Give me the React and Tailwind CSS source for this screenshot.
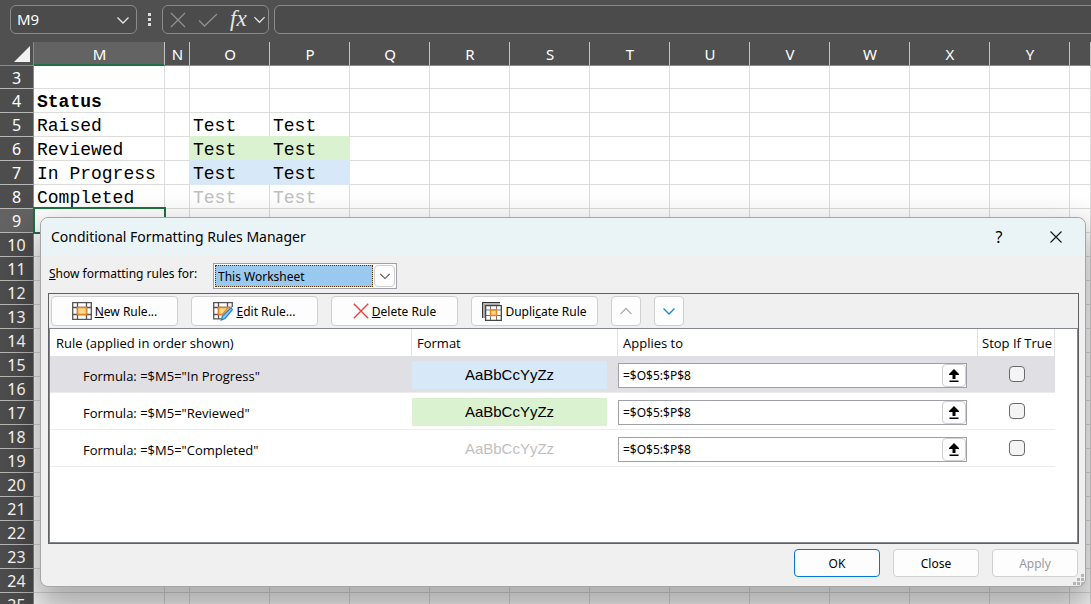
import { useState } from 'react';
import clsx from 'clsx';

const COLUMNS = ['M', 'N', 'O', 'P', 'Q', 'R', 'S', 'T', 'U', 'V', 'W', 'X', 'Y', ''];
const ROWS = Array.from({ length: 23 }, (_, i) => i + 3);

const CELLS = {
  M4: { text: 'Status', className: 'font-bold' },
  M5: { text: 'Raised' },
  M6: { text: 'Reviewed' },
  M7: { text: 'In Progress' },
  M8: { text: 'Completed' },
  N6: { className: 'border-r-[#daf2d0]' },
  N7: { className: 'border-r-[#d7e8f8]' },
  O5: { text: 'Test', className: 'border-b-[#daf2d0]' },
  P5: { text: 'Test', className: 'border-b-[#daf2d0]' },
  O6: { text: 'Test', className: 'bg-[#daf2d0] border-r-[#daf2d0] border-b-[#d7e8f8]' },
  P6: { text: 'Test', className: 'bg-[#daf2d0] border-r-[#daf2d0] border-b-[#d7e8f8]' },
  O7: { text: 'Test', className: 'bg-[#d7e8f8] border-r-[#d7e8f8] border-b-[#d7e8f8]' },
  P7: { text: 'Test', className: 'bg-[#d7e8f8] border-r-[#d7e8f8] border-b-[#d7e8f8]' },
  O8: { text: 'Test', className: 'text-[#bfbfbf]' },
  P8: { text: 'Test', className: 'text-[#bfbfbf]' },
};

const RULES = [
  { id: 1, status: 'In Progress', range: '=$O$5:$P$8', preview: 'bg-[#d7e8f8] text-black' },
  { id: 2, status: 'Reviewed', range: '=$O$5:$P$8', preview: 'bg-[#daf2d0] text-black' },
  { id: 3, status: 'Completed', range: '=$O$5:$P$8', preview: 'text-[#bfbfbf]' },
];

function Chevron({ className, up = false, size = 14 }) {
  return (
    <svg className={className} width={size} height={size} viewBox="0 0 14 14" fill="none" stroke="currentColor" strokeWidth="1.3">
      <path d={up ? 'M1.5 10 7 4.5l5.5 5.5' : 'M1.5 4.5 7 10l5.5-5.5'} />
    </svg>
  );
}

function GridIcon() {
  return (
    <svg width="20" height="18" viewBox="0 0 20 18" fill="none">
      <path d="M.5.5h19v17H.5z" fill="#fff" />
      <path d="M5.5 0v18M14.5 0v18M0 5.5h20M0 12.5h20M.7.7h18.6v16.6H.7z" stroke="#555" strokeWidth="1.3" />
      <path d="M5.5 5.5h9v7h-9z" fill="#fbd78b" stroke="#e8811a" strokeWidth="1.5" />
    </svg>
  );
}

function EditIcon() {
  return (
    <svg width="20" height="19" viewBox="0 0 20 19" fill="none">
      <path d="M.5.5h19v6L9 17.5H.5z" fill="#fff" />
      <path d="M5.5 0v17M14.5 0v6M0 5.5h19M0 12.5h10M9 16.8H.7V.7h18.6V5" stroke="#555" strokeWidth="1.3" />
      <path d="M5.5 5.5h10l-6 7h-4z" fill="#fbd78b" stroke="#e8811a" strokeWidth="1.5" />
      <path d="M7.5 18.5 9 13.5 17 5.5c1-.9 3.4 1 2.5 2.5l-8 8.5z" fill="#fff" />
      <path d="m8.3 18 1.2-4 7.7-7.5c1-.8 2.6.7 1.8 1.7L12 16.5z" fill="#8fc8f0" stroke="#1e7fc8" strokeWidth="1.2" />
    </svg>
  );
}

function DuplicateIcon() {
  return (
    <svg width="20" height="19" viewBox="0 0 20 19" fill="none">
      <path d="M.7 16V.7H18" stroke="#333" strokeWidth="1.3" />
      <path d="M1.500 16V1.500H18v2H3.500V16z" fill="#aaa" />
      <path d="M3.600 3.600h15.700v14.700H3.600z" fill="#fff" />
      <path d="M8.500 3v15.500M14.500 3v15.500M3 8h16.500M3 13.500h16.500" stroke="#777" />
      <path d="M3.600 3.600h15.700v14.700H3.600z" stroke="#444" strokeWidth="1.300" />
      <path d="M8.500 8h6v5.500h-6z" fill="#fbd78b" stroke="#e8811a" strokeWidth="1.400" />
    </svg>
  );
}

function DeleteIcon() {
  return (
    <svg width="16" height="16" viewBox="0 0 16 16" stroke="#e8413c" strokeWidth="1.4">
      <path d="m.8.8 14.400 14.400M15.200.8.8 15.200" />
    </svg>
  );
}

function FormulaBar() {
  return (
    <div className="flex h-[42px] items-start overflow-hidden bg-[#505050] pt-[5px] text-[#e6e6e6]">
      <div className="ml-2.5 flex h-[29px] w-[127px] shrink-0 items-center rounded-md border border-[#8a8a8a] bg-[#4b4b4b]">
        <input aria-label="Name box" defaultValue="M9" className="w-full min-w-0 bg-transparent pl-1.5 text-[15px] text-white outline-none" />
        <button type="button" aria-label="Cell names" className="mr-1.5 shrink-0">
          <Chevron />
        </button>
      </div>
      <div className="flex h-[29px] w-[25px] shrink-0 flex-col items-center justify-center gap-0.5">
        <span className="size-[3px] bg-[#dcdcdc]" />
        <span className="size-[3px] bg-[#dcdcdc]" />
        <span className="size-[3px] bg-[#dcdcdc]" />
      </div>
      <div className="flex h-[29px] w-[107px] shrink-0 items-center rounded-md border border-[#8a8a8a] bg-[#4b4b4b] pl-[7px]">
        <button type="button" aria-label="Cancel" className="text-[#8f8f8f]">
          <svg width="16" height="16" viewBox="0 0 16 16" stroke="currentColor" strokeWidth="1.3"><path d="m1 1 14 14M15 1 1 15" /></svg>
        </button>
        <button type="button" aria-label="Enter" className="ml-3 text-[#8f8f8f]">
          <svg width="20" height="16" viewBox="0 0 20 16" fill="none" stroke="currentColor" strokeWidth="1.3"><path d="m1 8.500 5.500 5.500L19 2" /></svg>
        </button>
        <button type="button" aria-label="Insert function" className="ml-3 w-[20px] pb-0.5 text-left font-['Liberation_Serif',serif] text-[23px] leading-5 italic">
          fx
        </button>
        <button type="button" aria-label="More functions" className="ml-[3px]">
          <Chevron size={13} />
        </button>
      </div>
      <input aria-label="Formula" className="ml-[5px] -mr-2 h-[29px] min-w-0 flex-1 rounded-md border border-[#8a8a8a] bg-[#4b4b4b] px-2 outline-none" />
    </div>
  );
}

function Sheet() {
  return (
    <table className="w-full table-fixed border-separate border-spacing-0 bg-white">
      <colgroup>
        <col className="w-[34px]" />
        <col className="w-[131px]" />
        <col className="w-[25px]" />
        {COLUMNS.slice(2, -1).map((c) => (
          <col key={c} className="w-[80px]" />
        ))}
        <col />
      </colgroup>
      <thead>
        <tr className="h-6 bg-[#505050] text-[15px] leading-5 text-white">
          <th className="border-r border-b border-[#8a8a8a] p-0" aria-label="Select all">
            <svg className="ml-[14px]" width="16" height="16" viewBox="0 0 16 16"><path d="M16 0v16H0z" fill="#f2f2f2" /></svg>
          </th>
          {COLUMNS.map((c) => (
            <th
              key={c}
              className={clsx(
                'border-r border-r-[#c4c4c4] p-0 pl-px font-normal',
                c === 'M' ? 'border-b-2 border-b-[#1e7145] bg-[#636363] pt-px' : 'border-b border-b-[#8a8a8a]'
              )}
            >
              {c}
            </th>
          ))}
        </tr>
      </thead>
      <tbody>
        {ROWS.map((row) => (
          <tr key={row} className={row === 3 ? 'h-[23px]' : 'h-6'}>
            <th
              className={clsx(
                'border-r border-b border-r-[#8a8a8a] border-b-[#b8b8b8] p-0 pt-px text-base leading-5 font-normal text-white',
                row === 9 ? 'bg-[#636363]' : 'bg-[#4d4d4d]'
              )}
            >
              {row}
            </th>
            {COLUMNS.map((col) => {
              const cell = CELLS[`${col}${row}`] || {};
              return (
                <td
                  key={col}
                  className={clsx(
                    "relative border-r border-b border-[#dcdcdc] pt-0.5 pr-0 pb-0 pl-[3px] font-['Liberation_Mono',monospace] text-lg leading-5 whitespace-nowrap",
                    cell.className
                  )}
                >
                  {cell.text}
                  {col === 'M' && row === 9 && (
                    <span className="absolute -top-0.5 -right-0.5 -bottom-0.5 -left-px border-2 border-[#1e7145]" />
                  )}
                </td>
              );
            })}
          </tr>
        ))}
      </tbody>
    </table>
  );
}

function ToolbarButton({ icon, children, className = 'w-[127px]', ...props }) {
  return (
    <button
      type="button"
      className={clsx('flex h-[30px] items-center justify-center gap-[3px] rounded border border-[#cfcfcf] bg-[#fdfdfd] whitespace-nowrap', className)}
      {...props}
    >
      {icon}
      {children && <span className="pt-0.5">{children}</span>}
    </button>
  );
}

function RulesTable({ selected, onSelect }) {
  return (
    <div className="min-h-[215px] border border-[#828790] bg-white pr-[22px]">
      <table className="w-full table-fixed border-separate border-spacing-0">
        <colgroup>
          <col className="w-[362px]" />
          <col className="w-[206px]" />
          <col />
          <col className="w-[77px]" />
        </colgroup>
        <thead>
          <tr className="h-[27px] text-left font-['Open_Sans',sans-serif] text-[13px]">
            <th className="border-r border-[#e2e2e2] p-0 pl-1.5 font-normal">Rule (applied in order shown)</th>
            <th className="border-r border-[#e2e2e2] p-0 pl-[5px] font-normal">Format</th>
            <th className="border-r border-[#e2e2e2] p-0 pl-[5px] font-normal">Applies to</th>
            <th className="border-r border-[#e2e2e2] p-0 pl-1 font-normal whitespace-nowrap">Stop If True</th>
          </tr>
        </thead>
        <tbody>
          {RULES.map((rule) => (
            <tr key={rule.id} onClick={() => onSelect(rule.id)} className={clsx('h-[37px]', selected === rule.id && 'bg-[#e0dfe4]')}>
              <td className="border-b border-[#ececec] p-0 pt-1 pl-[33px] font-['Open_Sans',sans-serif] text-[13px]">Formula: =$M5="{rule.status}"</td>
              <td className="border-b border-[#ececec] p-0 pt-0.5 pr-[11px]">
                <div className={clsx("h-7 text-center font-['Liberation_Sans',sans-serif] text-[15px] leading-7", rule.preview)}>AaBbCcYyZz</div>
              </td>
              <td className="border-b border-[#ececec] p-0 pt-0.5 pr-[11px]">
                <div className="flex h-[25px] items-center border border-[#a0a0a8] bg-white">
                  <input aria-label={`Applies to, ${rule.status}`} defaultValue={rule.range} className="min-w-0 flex-1 bg-transparent px-1 pt-0.5 outline-none" />
                  <button type="button" aria-label="Collapse dialog" className="flex h-[23px] w-6 items-center justify-center rounded border border-[#cfcfcf] bg-[#fdfdfd]">
                    <svg width="10" height="13" viewBox="0 0 10 13"><path d="M5 0l5 5v1H6.500v4h-3V6H0V5zM.5 11.500h9V13h-9z" fill="#000" /></svg>
                  </button>
                </div>
              </td>
              <td className="border-b border-[#ececec] p-0">
                <input
                  type="checkbox"
                  aria-label={`Stop if true, ${rule.status}`}
                  className="mx-auto block size-4 appearance-none rounded border border-[#6a6a6a] bg-[#f4f4f4] checked:bg-[#0067c0]"
                />
              </td>
            </tr>
          ))}
        </tbody>
      </table>
    </div>
  );
}

function RulesDialog() {
  const [selected, setSelected] = useState(1);

  return (
    <div
      role="dialog"
      aria-labelledby="rules-title"
      className="absolute top-[217px] right-[5px] left-[40px] rounded-lg border border-[#a6a6a6] bg-[#f0f0f0] text-[12px] leading-4 text-black shadow-[0_20px_36px_8px_rgba(0,0,0,0.32)]"
    >
      <div className="flex h-[37px] items-center rounded-t-lg bg-[#eaf4f7] pl-2.5">
        <h1 id="rules-title" className="flex-1 text-[14px] leading-5">Conditional Formatting Rules Manager</h1>
        <button type="button" aria-label="Help" className="mr-[43px] w-4 text-base leading-5">?</button>
        <button type="button" aria-label="Close dialog" className="mr-[23px]">
          <svg width="12" height="12" viewBox="0 0 12 12" stroke="#111" strokeWidth="1.1"><path d="m.5.5 11 11M11.500.5.5 11.500" /></svg>
        </button>
      </div>

      <div className="pt-2 pr-1.5 pb-[9px] pl-[7px]">
        <div className="mb-1 flex h-[26px] items-center gap-3">
          <label htmlFor="scope" className="w-[153px] pb-1 pl-px whitespace-nowrap"><u>S</u>how formatting rules for:</label>
          <div className="relative flex h-[26px] w-[184px] border border-[#a0a0a8] bg-white p-px">
            <select id="scope" className="w-full appearance-none bg-white bg-linear-to-r from-[#99c9ef] from-[158px] to-white to-[158px] pt-0.5 pl-[3px] outline-none">
              <option>This Worksheet</option>
              <option>Current Selection</option>
            </select>
            <span className="pointer-events-none absolute top-px bottom-px left-px w-[158px] border border-dotted border-[#5a3510]" />
            <span className="pointer-events-none absolute top-px right-px bottom-px flex w-[21px] items-center justify-center rounded-sm border border-[#cfcfcf] bg-[#fdfdfd] text-[#555]">
              <Chevron size={12} />
            </span>
          </div>
        </div>

        <div className="border border-[#5f6064]">
          <div className="flex gap-[13px] px-0.5 py-0.5">
            <ToolbarButton icon={<GridIcon />}><u>N</u>ew Rule...</ToolbarButton>
            <ToolbarButton icon={<EditIcon />}><u>E</u>dit Rule...</ToolbarButton>
            <ToolbarButton icon={<DeleteIcon />}><u>D</u>elete Rule</ToolbarButton>
            <ToolbarButton icon={<DuplicateIcon />}>Dupli<u>c</u>ate Rule</ToolbarButton>
            <ToolbarButton className="w-[30px] text-[#b0b0b0]" aria-label="Move up" icon={<Chevron up />} />
            <ToolbarButton className="w-[30px] text-[#1a86d0]" aria-label="Move down" icon={<Chevron />} />
          </div>
          <RulesTable selected={selected} onSelect={setSelected} />
        </div>

        <div className="flex justify-end gap-[13px] pt-[5px] pr-px">
          <button type="button" className="h-7 w-[86px] rounded border border-[#0078d4] bg-[#fdfdfd] pt-0.5">OK</button>
          <button type="button" className="h-7 w-[86px] rounded border border-[#d0d0d0] bg-[#fdfdfd] pt-0.5">Close</button>
          <button type="button" disabled className="h-7 w-[86px] rounded border border-[#d0d0d0] bg-[#fdfdfd] pt-0.5 text-[#9a9a9a]">Apply</button>
        </div>
      </div>

      <svg className="absolute right-px bottom-px" width="12" height="12" viewBox="0 0 12 12" fill="#b4b4b4">
        <path d="M9 1h3v3H9zM9 5h3v3H9zM9 9h3v3H9zM5 5h3v3H5zM5 9h3v3H5zM1 9h3v3H1z" />
      </svg>
    </div>
  );
}

export default function App() {
  return (
    <main className="relative h-screen overflow-hidden font-['Noto_Sans',sans-serif]">
      <FormulaBar />
      <Sheet />
      <RulesDialog />
    </main>
  );
}
